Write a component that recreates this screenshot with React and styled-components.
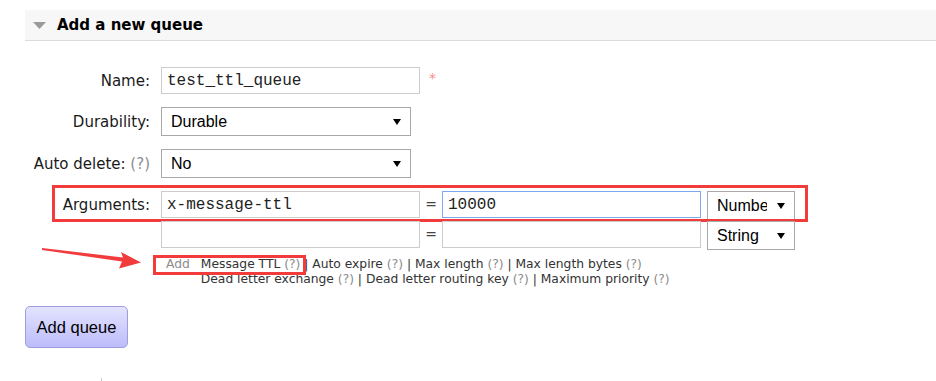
import React from 'react';
import styled, { createGlobalStyle } from 'styled-components';

const GlobalStyle = createGlobalStyle`
  body {
    margin: 0;
    background: #fff;
    font-family: "DejaVu Sans", Verdana, sans-serif;
    color: #222;
  }
`;

const ArrowDown = ({ w = 8, h = 6, color = '#000' }) => (
  <svg width={w} height={h} viewBox="0 0 8 6" preserveAspectRatio="none">
    <polygon points="0,0 8,0 4,6" fill={color} />
  </svg>
);

const Select = ({ value, width, gap = 0 }) => (
  <StSelect $w={width} $gap={gap}>
    <StSelectText>{value}</StSelectText>
    <ArrowDown />
  </StSelect>
);

const App = () => {
  return (
    <StPage>
      <GlobalStyle />
      <StHeader>
        <ArrowDown w={13} h={7} color="#9a9a9a" />
        <StTitle>Add a new queue</StTitle>
      </StHeader>

      <StForm>
        <StRow>
          <StLabel>Name:</StLabel>
          <StInput $w={259} defaultValue="test_ttl_queue" />
          <StRequired>*</StRequired>
        </StRow>
        <StRow>
          <StLabel>Durability:</StLabel>
          <Select value="Durable" width={250} />
        </StRow>
        <StRow>
          <StLabel>
            Auto delete: <StHelp>(?)</StHelp>
          </StLabel>
          <Select value="No" width={250} />
        </StRow>

        <StArgRow $gap={1}>
          <StLabel $tall>Arguments:</StLabel>
          <StInput $w={259} defaultValue="x-message-ttl" />
          <StEq>=</StEq>
          <StInput $w={259} $focus defaultValue="10000" />
          <Select value="Number" width={88} gap={6} />
          <StMark $left={27} $top={-6} $w={756} $h={37} />
        </StArgRow>
        <StArgRow $gap={0}>
          <StLabel $tall />
          <StInput $w={259} />
          <StEq>=</StEq>
          <StInput $w={259} />
          <Select value="String" width={88} gap={6} />
        </StArgRow>

        <StLinks>
          <StAdd>Add</StAdd>
          <div>
            <div>
              Message TTL <StHelp>(?)</StHelp> | Auto expire <StHelp>(?)</StHelp> | Max length{' '}
              <StHelp>(?)</StHelp> | Max length bytes <StHelp>(?)</StHelp>
            </div>
            <div>
              Dead letter exchange <StHelp>(?)</StHelp> | Dead letter routing key{' '}
              <StHelp>(?)</StHelp> | Maximum priority <StHelp>(?)</StHelp>
            </div>
          </div>
          <StMark $left={-13} $top={-2} $w={153} $h={20} />
        </StLinks>

        <StButton>Add queue</StButton>
        <StTick />
      </StForm>

      <StPointer width="130" height="35" viewBox="30 240 130 35">
        <polygon
          points="42,248 123,257.5 121,252 141,262.5 119,268.5 122,261.5 42,250"
          fill="#f23c3c"
        />
      </StPointer>
    </StPage>
  );
};

const StPage = styled.div`
  position: relative;
  height: 381px;
  box-sizing: border-box;
  padding: 10px 0 0 25px;
  overflow: hidden;
`;

const StHeader = styled.div`
  display: flex;
  align-items: center;
  gap: 11px;
  height: 30px;
  padding-left: 8px;
  background: #f7f7f7;
  border-bottom: 1px solid #dcdcdc;
`;

const StTitle = styled.h2`
  margin: 0;
  font-size: 15px;
  font-weight: bold;
  color: #000;
`;

const StForm = styled.div`
  padding-top: 26px;
`;

const StRow = styled.div`
  display: flex;
  align-items: center;
  margin-bottom: 13px;
`;

const StArgRow = styled.div`
  position: relative;
  display: flex;
  align-items: flex-start;
  margin-bottom: ${(p) => p.$gap}px;
`;

const StLabel = styled.div`
  width: 125px;
  margin-right: 11px;
  text-align: right;
  font-size: 15px;
  white-space: nowrap;
  color: #1a1a1a;
  line-height: ${(p) => (p.$tall ? '29px' : 'normal')};
`;

const StHelp = styled.span`
  color: #8c8c8c;
`;

const StInput = styled.input`
  width: ${(p) => p.$w}px;
  height: 27px;
  box-sizing: border-box;
  margin: 0;
  padding: 0 5px;
  border: 1px solid ${(p) => (p.$focus ? '#7fa6ee' : '#cccccc')};
  font: 16px "Liberation Mono", "Courier New", monospace;
  color: #222;
  outline: none;
`;

const StRequired = styled.span`
  align-self: flex-start;
  margin: 3px 0 0 9px;
  font-size: 14px;
  color: #f58f8f;
`;

const StSelect = styled.div`
  display: flex;
  align-items: center;
  width: ${(p) => p.$w}px;
  height: 29px;
  box-sizing: border-box;
  margin-left: ${(p) => p.$gap}px;
  padding: 0 9px;
  border: 1px solid #a9a9a9;
  background: #fff;
  font: 16px "Liberation Sans", Arial, sans-serif;
  color: #000;
`;

const StSelectText = styled.span`
  flex: 1;
  overflow: hidden;
  white-space: nowrap;
  margin-right: 10px;
`;

const StEq = styled.span`
  width: 22px;
  line-height: 27px;
  text-align: center;
  font-size: 14px;
  color: #444;
`;

const StMark = styled.div`
  position: absolute;
  left: ${(p) => p.$left}px;
  top: ${(p) => p.$top}px;
  width: ${(p) => p.$w}px;
  height: ${(p) => p.$h}px;
  box-sizing: border-box;
  border: 3px solid #f23c3c;
  pointer-events: none;
`;

const StLinks = styled.div`
  position: relative;
  display: flex;
  margin: 7px 0 0 141px;
  font-size: 12.3px;
  line-height: 15px;
  color: #333;
`;

const StAdd = styled.span`
  margin-right: 11px;
  color: #8c8c8c;
`;

const StButton = styled.button`
  display: block;
  width: 103px;
  height: 42px;
  margin-top: 19px;
  padding: 0;
  border: 1px solid #9d9de0;
  border-radius: 5px;
  background: linear-gradient(#e3e3ff, #bcbcfb);
  font: 16.5px "Liberation Sans", Arial, sans-serif;
  color: #000;
`;

const StTick = styled.div`
  width: 1px;
  height: 6px;
  margin: 30px 0 0 76px;
  background: #cccccc;
`;

const StPointer = styled.svg`
  position: absolute;
  left: 30px;
  top: 240px;
`;

export default App;
